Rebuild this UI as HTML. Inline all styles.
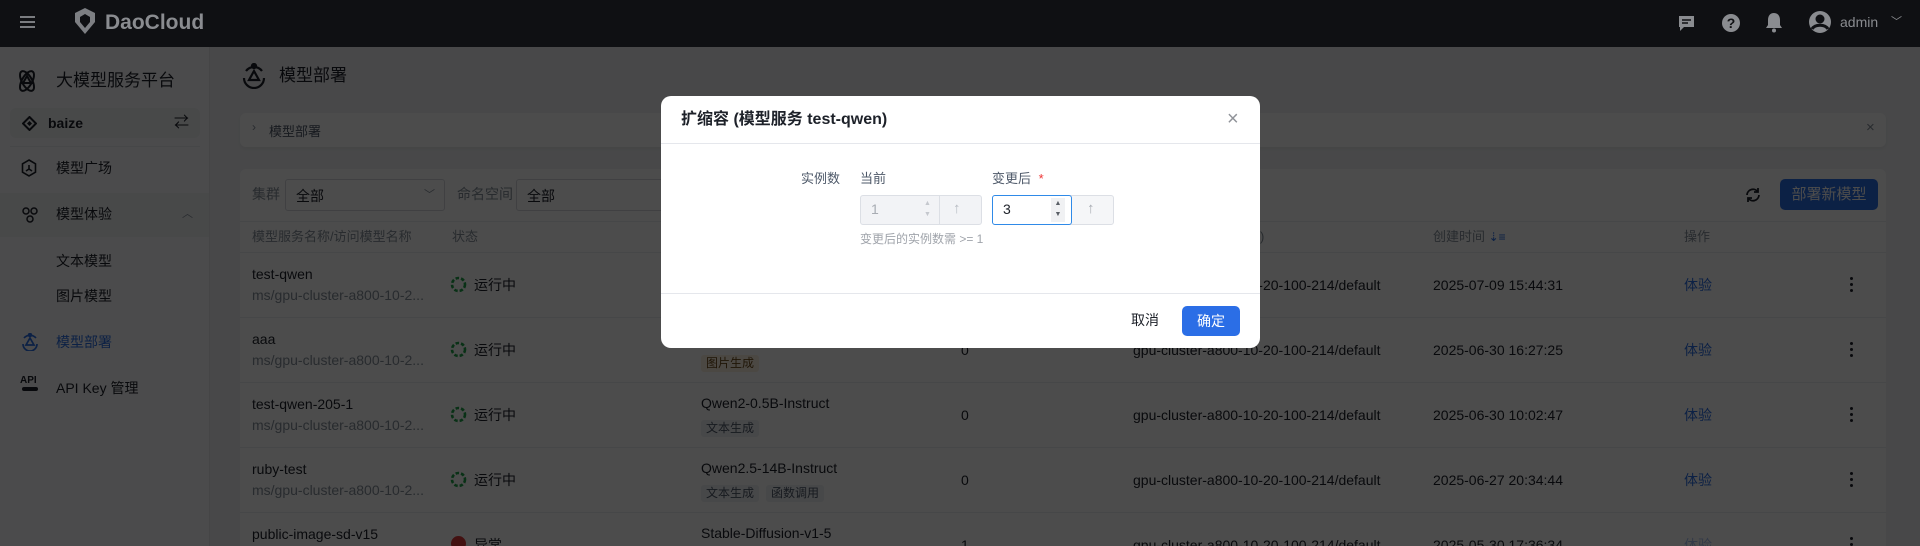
<!DOCTYPE html>
<html><head><meta charset="utf-8">
<style>
*{box-sizing:border-box;margin:0;padding:0}
html{width:1920px;height:546px;overflow:hidden}
body{width:1920px;height:546px;overflow:hidden;position:relative;background:#f1f2f4;font-family:"Liberation Sans","Noto Sans CJK SC",sans-serif;color:#1d2129;font-size:14px}
.abs{position:absolute}
.side{left:0;top:47px;width:210px;height:499px;background:#fcfcfd;border-right:1px solid #e6e8eb}
.si{position:absolute;left:56px;font-size:14px;color:#1d2129;line-height:20px}
.card{background:#fff;border-radius:6px;position:absolute}
.th{position:absolute;top:227px;color:#86909c;font-size:13px;line-height:20px}
.row{position:absolute;left:240px;width:1646px;height:65px;border-top:1px solid #eceef1}
.t{position:absolute;line-height:20px;font-size:14px;white-space:nowrap}
.sub{color:#86909c}
.tag{position:absolute;height:17px;line-height:17px;padding:0 5px;font-size:12px;border-radius:3px;background:#eef0f4;color:#4e5969}
.ov{left:0;top:0;width:1920px;height:546px;background:rgba(0,0,0,0.7)}
.kb{position:absolute;left:1850px;width:4px}
.kb i{display:block;width:3px;height:3px;border-radius:50%;background:#1d2129;margin:0 0 3px 0}
</style></head><body>
<!-- sidebar -->
<div class="abs side">
  <svg class="abs" style="left:14px;top:21px" width="26" height="26" viewBox="0 0 26 26" fill="none" stroke="#1d2129" stroke-width="2"><ellipse cx="13" cy="13" rx="11" ry="5" transform="rotate(60 13 13)"/><ellipse cx="13" cy="13" rx="11" ry="5" transform="rotate(-60 13 13)"/><path d="M13 8l4 7h-8z"/></svg>
  <div class="abs" style="left:56px;top:22px;font-size:17px;line-height:24px;color:#1d2129">大模型服务平台</div>
  <div class="abs" style="left:10px;top:61px;width:190px;height:30px;background:#f2f3f5;border-radius:6px"></div>
  <svg class="abs" style="left:22px;top:69px" width="15" height="15" viewBox="0 0 15 15"><path d="M7.5 1L14 7.5 7.5 14 1 7.5z" fill="none" stroke="#1d2129" stroke-width="2"/><path d="M7.5 5L10 7.5 7.5 10 5 7.5z" fill="#1d2129"/></svg>
  <div class="abs" style="left:48px;top:66px;font-size:14px;font-weight:bold;line-height:20px">baize</div>
  <div class="abs" style="left:174px;top:64px;font-size:15px">⇄</div>
  <div class="abs" style="left:10px;top:99px;width:190px;border-top:1px solid #eceef1"></div>
  <svg class="abs" style="left:21px;top:112px" width="16" height="18" viewBox="0 0 16 18" fill="none" stroke="#1d2129" stroke-width="1.6"><path d="M8 1l6.5 3.8v8.4L8 17 1.5 13.2V4.8z"/><path d="M8 6v4l-3 2M8 10l3 2"/></svg>
  <div class="si" style="top:111px">模型广场</div>
  <div class="abs" style="left:0;top:146px;width:209px;height:44px;background:#f2f3f5"></div>
  <svg class="abs" style="left:21px;top:159px" width="18" height="18" viewBox="0 0 18 18" fill="none" stroke="#1d2129" stroke-width="1.5"><circle cx="5" cy="5" r="3"/><circle cx="13" cy="5" r="3"/><circle cx="9" cy="13" r="3"/></svg>
  <div class="si" style="top:157px">模型体验</div>
  <div class="abs" style="left:182px;top:158px;font-size:11px;color:#86909c">︿</div>
  <div class="si" style="top:204px">文本模型</div>
  <div class="si" style="top:239px">图片模型</div>
  <svg class="abs" style="left:21px;top:286px" width="18" height="18" viewBox="0 0 18 18" fill="none" stroke="#2b6ee6" stroke-width="1.7"><path d="M3 5a8 8 0 0 1 12 0M2 11a7 7 0 0 0 14 0"/><path d="M9 5l4 7H5z"/><circle cx="9" cy="2" r="1.4" fill="#2b6ee6"/></svg>
  <div class="si" style="top:285px;color:#2b6ee6">模型部署</div>
  <div class="abs" style="left:20px;top:329px;font-size:10px;font-weight:bold;line-height:10px">API</div>
  <div class="abs" style="left:22px;top:340px;width:16px;height:4px;background:#1d2129;border-radius:2px"></div>
  <div class="si" style="top:331px">API Key 管理</div>
</div>
<!-- main header -->
<svg class="abs" style="left:242px;top:63px" width="24" height="26" viewBox="0 0 24 26" fill="none" stroke="#1d2129" stroke-width="2.2"><path d="M4 8a10 10 0 0 1 16 0M2 15a10 10 0 0 0 20 0"/><path d="M12 8l5 9H7z"/><circle cx="12" cy="3" r="2" fill="#1d2129"/></svg>
<div class="abs" style="left:279px;top:64px;font-size:17px;line-height:24px">模型部署</div>
<div class="card" style="left:240px;top:113px;width:1646px;height:34px;box-shadow:0 2px 4px rgba(0,0,0,.05)">
  <div class="abs" style="left:12px;top:7px;color:#86909c;font-size:12px">›</div>
  <div class="abs" style="left:29px;top:8px;font-size:13px;color:#4e5969">模型部署</div>
  <div class="abs" style="left:1626px;top:6px;color:#86909c;font-size:15px">×</div>
</div>
<div class="card" style="left:240px;top:169px;width:1646px;height:377px;border-radius:6px 6px 0 0"></div>
<div class="abs" style="left:252px;top:184px;color:#86909c;font-size:14px;line-height:20px">集群</div>
<div class="abs" style="left:285px;top:179px;width:160px;height:32px;border:1px solid #d5d8dd;border-radius:3px;background:#fff"><span class="abs" style="left:10px;top:6px">全部</span><span class="abs" style="left:138px;top:6px;color:#86909c;font-size:11px">﹀</span></div>
<div class="abs" style="left:457px;top:184px;color:#86909c;font-size:14px;line-height:20px">命名空间</div>
<div class="abs" style="left:516px;top:179px;width:160px;height:32px;border:1px solid #d5d8dd;border-radius:3px;background:#fff"><span class="abs" style="left:10px;top:6px">全部</span></div>
<svg class="abs" style="left:1744px;top:186px" width="18" height="18" viewBox="0 0 18 18" fill="none" stroke="#1d2129" stroke-width="1.8"><path d="M3 9a6 6 0 0 1 11-3M15 9a6 6 0 0 1-11 3"/><path d="M14 2v4h-4M4 16v-4h4"/></svg>
<div class="abs" style="left:1780px;top:179px;width:98px;height:31px;background:#2b6ee6;border-radius:5px;color:#fff;font-size:15px;line-height:31px;text-align:center">部署新模型</div>
<div class="abs" style="left:240px;top:221px;width:1646px;border-top:1px solid #eceef1"></div>
<div class="th" style="left:252px">模型服务名称/访问模型名称</div>
<div class="th" style="left:452px">状态</div>
<div class="th" style="left:1234px">空间)</div>
<div class="th" style="left:1433px">创建时间 <span style="color:#2b6ee6;font-size:12px">⇣≡</span></div>
<div class="th" style="left:1684px">操作</div>

<div class="row" style="top:252px"></div>
<div class="row" style="top:317px"></div>
<div class="row" style="top:382px"></div>
<div class="row" style="top:447px"></div>
<div class="row" style="top:512px;height:34px"></div>

<!-- rows -->
<div class="t" style="left:252px;top:264px">test-qwen</div><div class="t sub" style="left:252px;top:285px">ms/gpu-cluster-a800-10-2...</div>
<div class="t" style="left:252px;top:329px">aaa</div><div class="t sub" style="left:252px;top:350px">ms/gpu-cluster-a800-10-2...</div>
<div class="t" style="left:252px;top:394px">test-qwen-205-1</div><div class="t sub" style="left:252px;top:415px">ms/gpu-cluster-a800-10-2...</div>
<div class="t" style="left:252px;top:459px">ruby-test</div><div class="t sub" style="left:252px;top:480px">ms/gpu-cluster-a800-10-2...</div>
<div class="t" style="left:252px;top:524px">public-image-sd-v15</div>

<svg class="abs" style="left:450px;top:276px" width="17" height="17"><circle cx="8.5" cy="8.5" r="6.5" fill="none" stroke="#1fa34a" stroke-width="2.6" stroke-dasharray="3.5 2"/></svg><div class="t" style="left:474px;top:275px">运行中</div>
<svg class="abs" style="left:450px;top:341px" width="17" height="17"><circle cx="8.5" cy="8.5" r="6.5" fill="none" stroke="#1fa34a" stroke-width="2.6" stroke-dasharray="3.5 2"/></svg><div class="t" style="left:474px;top:340px">运行中</div>
<svg class="abs" style="left:450px;top:406px" width="17" height="17"><circle cx="8.5" cy="8.5" r="6.5" fill="none" stroke="#1fa34a" stroke-width="2.6" stroke-dasharray="3.5 2"/></svg><div class="t" style="left:474px;top:405px">运行中</div>
<svg class="abs" style="left:450px;top:471px" width="17" height="17"><circle cx="8.5" cy="8.5" r="6.5" fill="none" stroke="#1fa34a" stroke-width="2.6" stroke-dasharray="3.5 2"/></svg><div class="t" style="left:474px;top:470px">运行中</div>
<div class="abs" style="left:451px;top:536px;width:15px;height:15px;border-radius:50%;background:#e23b3b"></div><div class="t" style="left:474px;top:535px">异常</div>

<div class="tag" style="left:701px;top:355px;background:#fbf0e0;color:#6b4b1a">图片生成</div>
<div class="t" style="left:701px;top:393px">Qwen2-0.5B-Instruct</div><div class="tag" style="left:701px;top:420px">文本生成</div>
<div class="t" style="left:701px;top:458px">Qwen2.5-14B-Instruct</div><div class="tag" style="left:701px;top:485px">文本生成</div><div class="tag" style="left:766px;top:485px">函数调用</div>
<div class="t" style="left:701px;top:523px">Stable-Diffusion-v1-5</div>

<div class="t" style="left:961px;top:340px">0</div><div class="t" style="left:961px;top:405px">0</div><div class="t" style="left:961px;top:470px">0</div><div class="t" style="left:961px;top:535px">1</div>
<div class="t" style="left:1133px;top:275px">gpu-cluster-a800-10-20-100-214/default</div>
<div class="t" style="left:1133px;top:340px">gpu-cluster-a800-10-20-100-214/default</div>
<div class="t" style="left:1133px;top:405px">gpu-cluster-a800-10-20-100-214/default</div>
<div class="t" style="left:1133px;top:470px">gpu-cluster-a800-10-20-100-214/default</div>
<div class="t" style="left:1133px;top:535px">gpu-cluster-a800-10-20-100-214/default</div>
<div class="t" style="left:1433px;top:275px">2025-07-09 15:44:31</div>
<div class="t" style="left:1433px;top:340px">2025-06-30 16:27:25</div>
<div class="t" style="left:1433px;top:405px">2025-06-30 10:02:47</div>
<div class="t" style="left:1433px;top:470px">2025-06-27 20:34:44</div>
<div class="t" style="left:1433px;top:535px">2025-05-30 17:36:34</div>
<div class="t" style="left:1684px;top:275px;color:#2b6ee6">体验</div>
<div class="t" style="left:1684px;top:340px;color:#2b6ee6">体验</div>
<div class="t" style="left:1684px;top:405px;color:#2b6ee6">体验</div>
<div class="t" style="left:1684px;top:470px;color:#2b6ee6">体验</div>
<div class="t" style="left:1684px;top:535px;color:#aac4f0">体验</div>
<div class="kb" style="top:277px"><i></i><i></i><i></i></div>
<div class="kb" style="top:342px"><i></i><i></i><i></i></div>
<div class="kb" style="top:407px"><i></i><i></i><i></i></div>
<div class="kb" style="top:472px"><i></i><i></i><i></i></div>
<div class="kb" style="top:537px"><i></i><i></i><i></i></div>

<div class="abs ov"></div>

<!-- top bar -->
<div class="abs" style="left:0;top:0;width:1920px;height:47px;background:#0f1013">
  <div class="abs" style="left:20px;top:16px;width:15px;height:2px;background:#7a7c80;box-shadow:0 5px 0 #7a7c80,0 10px 0 #7a7c80"></div>
  <svg class="abs" style="left:73px;top:7px" width="24" height="28" viewBox="0 0 24 28"><path d="M12 1l10 5v9l-10 12L2 15V6z" fill="#7d7f83"/><path d="M12 7l5 3v5l-5 6-5-6v-5z" fill="#0f1013"/></svg>
  <div class="abs" style="left:105px;top:9px;font-size:21px;font-weight:bold;color:#8a8c90;line-height:28px">DaoCloud</div>
  <svg class="abs" style="left:1677px;top:14px" width="19" height="19" viewBox="0 0 19 19"><path d="M2 2h15v11H7l-4 4v-4H2z" fill="#8a8c90"/><path d="M5 6h9M5 9h6" stroke="#0f1013" stroke-width="1.6"/></svg>
  <svg class="abs" style="left:1721px;top:13px" width="20" height="20"><circle cx="10" cy="10" r="9" fill="#8a8c90"/><text x="10" y="15" font-size="14" font-weight="bold" text-anchor="middle" fill="#0f1013" font-family="Liberation Sans">?</text></svg>
  <svg class="abs" style="left:1765px;top:12px" width="18" height="21" viewBox="0 0 18 21"><path d="M9 1c4 0 6 3 6 7v5l2 3H1l2-3V8c0-4 2-7 6-7z" fill="#8a8c90"/><circle cx="9" cy="18.5" r="2" fill="#8a8c90"/></svg>
  <svg class="abs" style="left:1808px;top:10px" width="24" height="24"><circle cx="12" cy="12" r="11" fill="#8a8c90"/><circle cx="12" cy="9" r="4.5" fill="#0f1013"/><path d="M4 19c3-5 13-5 16 0" stroke="#0f1013" stroke-width="3" fill="none"/></svg>
  <div class="abs" style="left:1840px;top:12px;color:#8a8c90;font-size:14px;line-height:20px">admin</div>
  <div class="abs" style="left:1891px;top:13px;color:#8a8c90;font-size:11px">﹀</div>
</div>

<!-- modal -->
<div class="abs" style="left:661px;top:96px;width:599px;height:252px;background:#fff;border-radius:10px;overflow:hidden">
  <div class="abs" style="left:20px;top:12px;font-size:16px;font-weight:bold;line-height:24px;color:#1d2129">扩缩容 (模型服务 test-qwen)</div>
  <div class="abs" style="left:566px;top:10px;font-size:20px;color:#909399;line-height:26px">×</div>
  <div class="abs" style="left:0;top:47px;width:599px;border-top:1px solid #e5e7ec"></div>
  <div class="abs" style="left:140px;top:73px;font-size:13px;color:#4e5969;line-height:20px">实例数</div>
  <div class="abs" style="left:199px;top:73px;font-size:13px;color:#4e5969;line-height:20px">当前</div>
  <div class="abs" style="left:331px;top:73px;font-size:13px;color:#4e5969;line-height:20px">变更后 <span style="color:#e33;margin-left:4px">*</span></div>
  <div class="abs" style="left:199px;top:99px;width:122px;height:30px;border:1px solid #dcdfe5;border-radius:3px;background:#f2f3f6">
    <span class="abs" style="left:10px;top:5px;color:#a8acb3;font-size:14px">1</span>
    <span class="abs" style="left:63px;top:2px;color:#c5c8ce;font-size:7px;line-height:11px">▲<br>▼</span>
    <div class="abs" style="left:78px;top:0;height:28px;border-left:1px solid #dcdfe5"></div>
    <span class="abs" style="left:92px;top:4px;color:#b8bcc3;font-size:15px">↑</span>
  </div>
  <div class="abs" style="left:331px;top:99px;width:122px;height:30px;border:1px solid #dcdfe5;border-radius:3px;background:#f5f6f8">
    <div class="abs" style="left:-1px;top:-1px;width:80px;height:30px;border:1.5px solid #2f8ae8;border-radius:3px;background:#fff">
      <span class="abs" style="left:10px;top:5px;font-size:14px">3</span>
      <span class="abs" style="left:58px;top:2px;width:14px;height:24px;background:#f0f1f3;color:#5a5f66;font-size:7px;line-height:11px;text-align:center">▲<br>▼</span>
    </div>
    <span class="abs" style="left:94px;top:4px;color:#a8acb3;font-size:15px">↑</span>
  </div>
  <div class="abs" style="left:199px;top:135px;font-size:12px;color:#a0a4ab;line-height:16px">变更后的实例数需 &gt;= 1</div>
  <div class="abs" style="left:0;top:197px;width:599px;border-top:1px solid #e5e7ec"></div>
  <div class="abs" style="left:470px;top:214px;font-size:14px;color:#1d2129;line-height:20px">取消</div>
  <div class="abs" style="left:521px;top:210px;width:58px;height:30px;background:#2b6ee6;border-radius:5px;color:#fff;text-align:center;line-height:30px;font-size:14px">确定</div>
</div>
</body></html>
